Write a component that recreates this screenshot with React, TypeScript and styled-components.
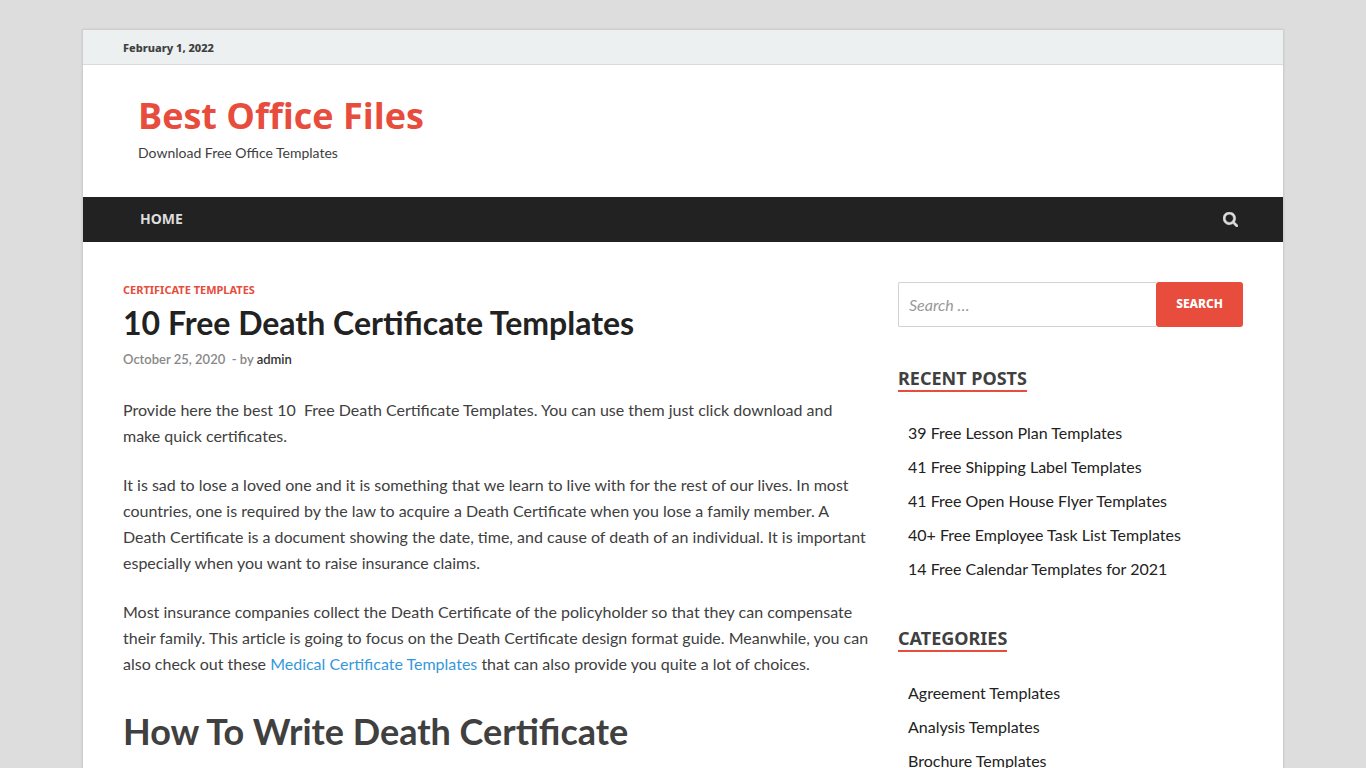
import React from "react";
import styled, { createGlobalStyle } from "styled-components";

const heading = `"Noto Sans", "Open Sans", sans-serif`;
const body = `Lato, "Open Sans", sans-serif`;
const red = "#e74c3c";

const GlobalStyle = createGlobalStyle`
  *, *::before, *::after { box-sizing: border-box; }
  body {
    margin: 0;
    background: #dddddd;
    color: #404040;
    font-family: ${body};
    font-size: 16px;
    line-height: 26px;
  }
  a { text-decoration: none; }
`;

const Page = styled.div`
  max-width: 1200px;
  margin: 30px auto 0;
  background: #ffffff;
  box-shadow: 0 0 2px 1px rgba(0, 0, 0, 0.1);
`;

const TopBar = styled.div`
  padding: 2px 40px 0;
  background: #ecf0f1;
  border-bottom: 1px solid #d7dbdc;
  font-family: ${heading};
  font-size: 11px;
  font-weight: 800;
  line-height: 32px;
`;

const Branding = styled.header`
  padding: 28px 55px 31px;
`;

const SiteTitle = styled.h1`
  margin: 0;
  padding-bottom: 2px;
  font-family: "Open Sans", sans-serif;
  font-size: 36px;
  font-weight: 700;
  line-height: 45px;

  a { color: ${red}; }
`;

const Tagline = styled.p`
  margin: 0;
  font-size: 14px;
`;

const NavBar = styled.nav`
  display: flex;
  align-items: center;
  justify-content: space-between;
  padding: 0 40px;
  background: #222222;
`;

const NavLink = styled.a`
  padding: 0 17px 2px;
  color: #dddddd;
  font-family: ${heading};
  font-size: 14px;
  font-weight: 700;
  line-height: 43px;
`;

const IconButton = styled.button`
  display: flex;
  padding: 5px;
  border: 0;
  background: none;
  color: #dddddd;
  cursor: pointer;
`;

const Content = styled.div`
  display: flex;
  gap: 28px;
  padding: 40px;
`;

const Article = styled.article`
  flex: 1;
  min-width: 0;
`;

const Category = styled.a`
  display: block;
  color: ${red};
  font-family: ${heading};
  font-size: 11px;
  font-weight: 700;
  line-height: 16px;
`;

const PostTitle = styled.h2`
  margin: 0;
  color: #222222;
  font-size: 32px;
  font-weight: 700;
  line-height: 50px;
`;

const Meta = styled.p`
  margin: 0 0 27px;
  color: #888888;
  font-size: 13px;
  font-weight: 600;
  line-height: 22px;

  a { color: #888888; }
  a:last-child { color: #333333; }
`;

const Paragraph = styled.p`
  margin: 0 0 23px;

  a { color: #3498db; }
`;

const SectionTitle = styled.h2`
  margin: 0;
  font-size: 36px;
  font-weight: 700;
  line-height: 62px;
`;

const Sidebar = styled.aside`
  flex: 0 1 345px;
  min-width: 0;
`;

const SearchForm = styled.form`
  display: flex;
  margin-bottom: 40px;
`;

const SearchInput = styled.input`
  flex: 1;
  min-width: 0;
  height: 45px;
  padding: 0 10px;
  border: 1px solid #d3d3d3;
  border-right: 0;
  border-radius: 2px 0 0 2px;
  font: italic 16px ${body};

  &::placeholder { color: #999999; opacity: 1; }
`;

const SearchButton = styled.button`
  padding: 0 20px 2px;
  border: 0;
  border-radius: 3px;
  background: ${red};
  color: #ffffff;
  font: 800 12px ${heading};
  cursor: pointer;
`;

const Widget = styled.section`
  margin-bottom: 41px;
`;

const WidgetTitle = styled.h3`
  width: fit-content;
  margin: 0 0 24px;
  border-bottom: 2px solid ${red};
  font-family: ${heading};
  font-size: 18px;
  font-weight: 700;
  line-height: 23px;
`;

const LinkList = styled.ul`
  margin: 0;
  padding: 0 10px;
  list-style: none;

  li { line-height: 34px; }
  a { color: #222222; }
`;

const recentPosts = [
  "39 Free Lesson Plan Templates",
  "41 Free Shipping Label Templates",
  "41 Free Open House Flyer Templates",
  "40+ Free Employee Task List Templates",
  "14 Free Calendar Templates for 2021",
];

const categories = [
  "Agreement Templates",
  "Analysis Templates",
  "Brochure Templates",
];

function LinkWidget({ title, items }: { title: string; items: string[] }) {
  return (
    <Widget>
      <WidgetTitle>{title}</WidgetTitle>
      <LinkList>
        {items.map((item) => (
          <li key={item}>
            <a href="#">{item}</a>
          </li>
        ))}
      </LinkList>
    </Widget>
  );
}

export default function App() {
  return (
    <>
      <GlobalStyle />
      <Page>
        <TopBar>February 1, 2022</TopBar>
        <Branding>
          <SiteTitle>
            <a href="#">Best Office Files</a>
          </SiteTitle>
          <Tagline>Download Free Office Templates</Tagline>
        </Branding>
        <NavBar>
          <NavLink href="#">HOME</NavLink>
          <IconButton type="button" aria-label="Open search">
            <svg width="15" height="15" viewBox="0 0 1664 1664" fill="currentColor" stroke="currentColor" strokeWidth="50">
              <path d="M1152 704q0-185-131.500-316.500T704 256 387.500 387.500 256 704t131.500 316.500T704 1152t316.500-131.500T1152 704zm512 832q0 52-38 90t-90 38q-54 0-90-38l-343-342q-179 124-399 124-143 0-273.500-55.500t-225-150-150-225T0 704t55.500-273.500 150-225 225-150T704 0t273.500 55.500 225 150 150 225T1408 704q0 220-124 399l343 343q37 37 37 90z" />
            </svg>
          </IconButton>
        </NavBar>
        <Content>
          <Article>
            <Category href="#">CERTIFICATE TEMPLATES</Category>
            <PostTitle>10 Free Death Certificate Templates</PostTitle>
            <Meta>
              <a href="#">October 25, 2020</a>
              {" \u00a0- "}by <a href="#">admin</a>
            </Meta>
            <Paragraph>
              Provide here the best 10 &nbsp;Free Death Certificate Templates.
              You can use them just click download and make quick certificates.
            </Paragraph>
            <Paragraph>
              It is sad to lose a loved one and it is something that we learn to
              live with for the rest of our lives. In most countries, one is
              required by the law to acquire a Death Certificate when you lose a
              family member. A Death Certificate is a document showing the date,
              time, and cause of death of an individual. It is important
              especially when you want to raise insurance claims.
            </Paragraph>
            <Paragraph>
              Most insurance companies collect the Death Certificate of the
              policyholder so that they can compensate their family. This
              article is going to focus on the Death Certificate design format
              guide. Meanwhile, you can also check out these{" "}
              <a href="#">Medical Certificate Templates</a> that can also
              provide you quite a lot of choices.
            </Paragraph>
            <SectionTitle>How To Write Death Certificate</SectionTitle>
          </Article>
          <Sidebar>
            <SearchForm role="search" onSubmit={(e) => e.preventDefault()}>
              <SearchInput
                type="search"
                aria-label="Search for"
                placeholder="Search …"
              />
              <SearchButton type="submit">SEARCH</SearchButton>
            </SearchForm>
            <LinkWidget title="RECENT POSTS" items={recentPosts} />
            <LinkWidget title="CATEGORIES" items={categories} />
          </Sidebar>
        </Content>
      </Page>
    </>
  );
}
